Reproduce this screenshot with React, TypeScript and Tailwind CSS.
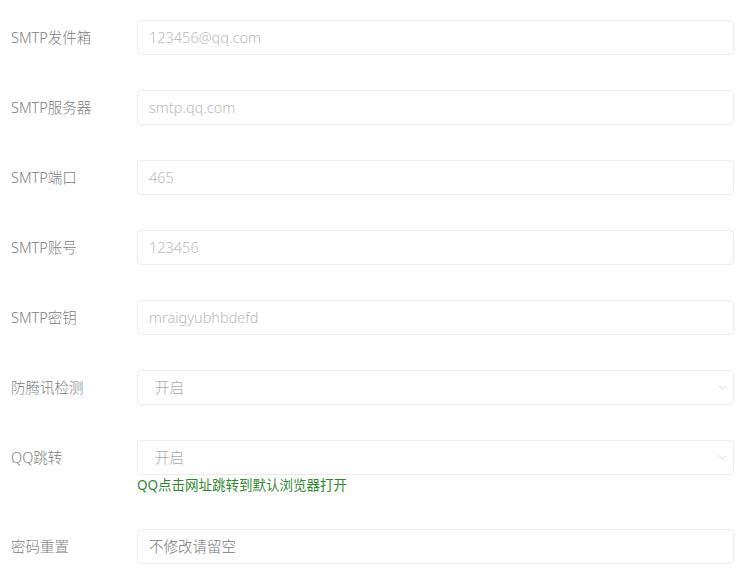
import React from 'react';
import { ChevronDown } from 'lucide-react';

type Field = {
  label: string;
  value: string;
  kind: 'input' | 'select';
  dark?: boolean;
  help?: string;
};

const fields: Field[] = [
  { label: 'SMTP发件箱', value: '123456@qq.com', kind: 'input' },
  { label: 'SMTP服务器', value: 'smtp.qq.com', kind: 'input' },
  { label: 'SMTP端口', value: '465', kind: 'input' },
  { label: 'SMTP账号', value: '123456', kind: 'input' },
  { label: 'SMTP密钥', value: 'mraigyubhbdefd', kind: 'input' },
  { label: '防腾讯检测', value: '开启', kind: 'select' },
  { label: 'QQ跳转', value: '开启', kind: 'select', help: 'QQ点击网址跳转到默认浏览器打开' },
  { label: '密码重置', value: '不修改请留空', kind: 'input', dark: true },
];

export default function App() {
  return (
    <div
      className="min-h-[580px] bg-white pt-[20px] pl-[11px] pr-[14px]"
      style={{ fontFamily: '"Noto Sans", "Noto Sans CJK SC", sans-serif' }}
    >
      {fields.map((f) => (
        <div key={f.label} className="mb-[35px]">
          <div className="flex items-center">
            <div className="w-[126px] shrink-0 text-[14.5px] font-light text-[#808080]">{f.label}</div>
            <div className="flex h-[35px] flex-1 items-center rounded-[4px] border border-[#ececec] bg-white">
              {f.kind === 'input' ? (
                <span className={`pl-[11px] text-[14.5px] font-light ${f.dark ? 'text-[#777]' : 'text-[#bbb]'}`}>
                  {f.value}
                </span>
              ) : (
                <>
                  <span className="flex-1 pl-[17px] text-[14.5px] font-light text-[#aaa]">{f.value}</span>
                  <ChevronDown className="mr-[4px] h-[13px] w-[13px] text-[#c8c8c8]" strokeWidth={1.5} />
                </>
              )}
            </div>
          </div>
          {f.help && (
            <div className="ml-[126px] h-[19px] pt-[2px] text-[13.5px] leading-[17px] text-[#2f8a2f]">
              {f.help}
            </div>
          )}
        </div>
      ))}
    </div>
  );
}
